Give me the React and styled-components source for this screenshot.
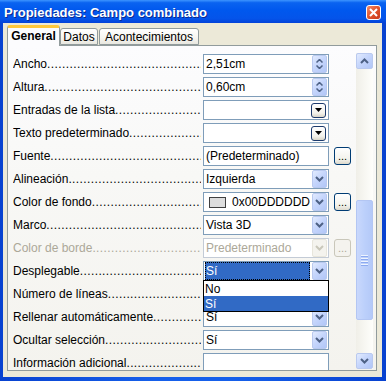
import React from "react";
import styled, { createGlobalStyle } from "styled-components";

const Global = createGlobalStyle`
  html, body {
    margin: 0;
    padding: 0;
    background: #ffffff;
  }
  body {
    font-family: "Liberation Sans", Arial, sans-serif;
  }
  * {
    box-sizing: border-box;
  }
`;

const Window = styled.div`
  width: 386px;
  height: 381px;
  display: flex;
  flex-direction: column;
  background: #0a46d8;
  overflow: hidden;
`;

const TitleBar = styled.div`
  height: 23px;
  display: flex;
  align-items: center;
  justify-content: space-between;
  padding: 0 5px 0 4px;
  background: linear-gradient(
    to bottom,
    #3d95ff 0%,
    #0a63f0 12%,
    #0058ee 45%,
    #0454ea 80%,
    #0342d8 100%
  );
`;

const Title = styled.div`
  color: #ffffff;
  font-family: "Liberation Sans", Arial, sans-serif;
  font-weight: 700;
  font-size: 13px;
  text-shadow: 1px 1px 0 #0a2a90;
  margin-top: 1px;
`;

const CloseButton = styled.div`
  width: 15px;
  height: 15px;
  border: 1px solid #ffffff;
  border-radius: 3px;
  background: linear-gradient(135deg, #f28a6a 0%, #e0542c 50%, #c8381a 100%);
  display: flex;
  align-items: center;
  justify-content: center;
  margin-top: 1px;
`;

const Frame = styled.div`
  flex: 1;
  display: flex;
  padding: 0 4px 4px 3px;
  background: linear-gradient(to right, #0842d0, #1660ea 40%, #1660ea 60%, #0842d0);
`;

const Body = styled.div`
  flex: 1;
  background: #ece9d8;
  padding: 2px 5px 0 4px;
  display: flex;
  flex-direction: column;
`;

const TabRow = styled.div`
  display: flex;
  align-items: flex-end;
  height: 20px;
  position: relative;
  z-index: 2;
`;

const Tab = styled.div`
  width: ${(p) => p.$w}px;
  height: ${(p) => (p.$active ? 21 : 17)}px;
  margin-left: ${(p) => p.$ml || 0}px;
  margin-bottom: ${(p) => (p.$active ? -1 : 0)}px;
  border: 1px solid #919b9c;
  border-bottom: ${(p) => (p.$active ? "none" : "1px solid #919b9c")};
  border-top: ${(p) => (p.$active ? "3px solid #ffc83c" : "1px solid #919b9c")};
  border-radius: 3px 3px 0 0;
  background: ${(p) =>
    p.$active
      ? "#fcfcfe"
      : "linear-gradient(to bottom, #ffffff 0%, #f6f5f0 60%, #e8e7e0 100%)"};
  font-size: 12px;
  font-weight: ${(p) => (p.$active ? 700 : 400)};
  color: #000000;
  display: flex;
  align-items: center;
  justify-content: center;
  padding-bottom: ${(p) => (p.$active ? 2 : 0)}px;
`;

const Panel = styled.div`
  height: 326px;
  border: 1px solid #919b9c;
  background: linear-gradient(to bottom, #fcfcfe 0%, #f8f8f6 40%, #f4f3ee 100%);
  display: flex;
  padding: 0 3px 0 5px;
  overflow: hidden;
  position: relative;
`;

const PropList = styled.div`
  width: 338px;
  padding-top: 8px;
  display: flex;
  flex-direction: column;
  gap: 3px;
`;

const Row = styled.div`
  display: flex;
  align-items: center;
  height: 20px;
  flex-shrink: 0;
`;

const Label = styled.div`
  width: 190px;
  padding-right: 2px;
  display: flex;
  font-size: 12px;
  color: ${(p) => (p.$disabled ? "#aca899" : "#000000")};
  white-space: nowrap;
  overflow: hidden;
`;

const Dots = styled.span`
  flex: 1;
  overflow: hidden;
  letter-spacing: 0.4px;
`;

const Field = styled.div`
  position: relative;
  width: 126px;
  height: 20px;
  border: 1px solid ${(p) => (p.$disabled ? "#c3cbd6" : "#7f9db9")};
  background: #ffffff;
  display: flex;
  align-items: center;
  padding: 1px;
  font-size: 12px;
  color: ${(p) => (p.$disabled ? "#aca899" : "#000000")};
`;

const FieldText = styled.div`
  flex: 1;
  padding-left: 1px;
  white-space: nowrap;
  overflow: hidden;
  display: flex;
  align-items: center;
  gap: 6px;
`;

const Selected = styled.div`
  flex: 1;
  height: 18px;
  margin-right: 2px;
  background: #316ac5;
  color: #ffffff;
  outline: 1px dotted #000000;
  outline-offset: -1px;
  display: flex;
  align-items: center;
  padding-left: 1px;
`;

const Swatch = styled.span`
  width: 17px;
  height: 11px;
  margin-left: 3px;
  background: #dddddd;
  border: 1px solid #404040;
`;

const ComboButton = styled.div`
  width: 15px;
  height: 18px;
  border: 1px solid ${(p) => (p.$disabled ? "#e8e6dc" : "#b9c9ef")};
  border-radius: 2px;
  background: ${(p) =>
    p.$disabled
      ? "#f4f3ee"
      : "linear-gradient(135deg, #e2ebfe 0%, #c6d6fc 45%, #b1c6f7 100%)"};
  display: flex;
  flex-direction: column;
  align-items: center;
  justify-content: center;
  gap: 2px;
`;

const ClassicButton = styled.div`
  width: 15px;
  height: 15px;
  margin-right: 1px;
  border: 1px solid #1c3a6c;
  border-radius: 3px;
  background: linear-gradient(to bottom, #ffffff 0%, #f3f2ec 70%, #d8d5c8 100%);
  display: flex;
  align-items: center;
  justify-content: center;
`;

const DotsButton = styled.div`
  width: 17px;
  height: 18px;
  margin-left: 5px;
  border: 1px solid ${(p) => (p.$disabled ? "#c9c7ba" : "#003c74")};
  border-radius: 3px;
  background: ${(p) =>
    p.$disabled
      ? "#f4f3ee"
      : "linear-gradient(to bottom, #ffffff 0%, #f3f2ec 70%, #dcd9cc 100%)"};
  color: ${(p) => (p.$disabled ? "#aca899" : "#000000")};
  font-size: 11px;
  display: flex;
  align-items: flex-end;
  justify-content: center;
  padding-bottom: 2px;
  line-height: 1;
`;

const DropList = styled.div`
  position: absolute;
  left: -1px;
  top: 18px;
  width: 126px;
  height: 32px;
  border: 1px solid #000000;
  background: #ffffff;
  z-index: 5;
  display: flex;
  flex-direction: column;
`;

const DropItem = styled.div`
  height: 15px;
  padding-left: 1px;
  display: flex;
  align-items: center;
  font-size: 12px;
  background: ${(p) => (p.$active ? "#316ac5" : "#ffffff")};
  color: ${(p) => (p.$active ? "#ffffff" : "#000000")};
`;

const Scrollbar = styled.div`
  width: 17px;
  margin-left: 5px;
  margin-top: 7px;
  height: 316px;
  display: flex;
  flex-direction: column;
  background: linear-gradient(to right, #f0efe8, #fefefb);
`;

const ScrollButton = styled.div`
  height: 16px;
  flex-shrink: 0;
  border: 1px solid #b9c9ef;
  border-radius: 2px;
  background: linear-gradient(135deg, #e2ebfe 0%, #c6d6fc 45%, #b1c6f7 100%);
  display: flex;
  align-items: center;
  justify-content: center;
`;

const Track = styled.div`
  flex: 1;
  padding-top: ${(p) => p.$offset}px;
`;

const Thumb = styled.div`
  height: ${(p) => p.$size}px;
  border: 1px solid #b3c6f3;
  border-radius: 2px;
  background: linear-gradient(to right, #c9d8fc 0%, #bcd0fb 50%, #b4c9f8 100%);
  display: flex;
  flex-direction: column;
  align-items: center;
  justify-content: center;
  gap: 1px;
`;

const Grip = styled.span`
  width: 7px;
  height: 1px;
  background: #eef4fe;
  box-shadow: 0 1px 0 #8caaf0;
  margin-bottom: 1px;
`;

function Chevron({ up, color = "#4d6185", small }) {
  const w = small ? 7 : 9;
  const h = small ? 4 : 6;
  const d = small
    ? up
      ? "M0.5 3.5 L3.5 0.5 L6.5 3.5"
      : "M0.5 0.5 L3.5 3.5 L6.5 0.5"
    : up
    ? "M1 5 L4.5 1.5 L8 5"
    : "M1 1 L4.5 4.5 L8 1";
  return (
    <svg width={w} height={h} viewBox={`0 0 ${w} ${h}`}>
      <path d={d} fill="none" stroke={color} strokeWidth={small ? 1.5 : 2} />
    </svg>
  );
}

function Triangle() {
  return (
    <svg width="7" height="4" viewBox="0 0 7 4">
      <path d="M0 0 L7 0 L3.5 4 Z" fill="#000000" />
    </svg>
  );
}

function Prop({ label, disabled, children, extra }) {
  return (
    <Row>
      <Label $disabled={disabled}>
        {label}
        <Dots>{".".repeat(80)}</Dots>
      </Label>
      {children}
      {extra}
    </Row>
  );
}

function Combo({ value, disabled, children }) {
  return (
    <Field $disabled={disabled}>
      {children || <FieldText>{value}</FieldText>}
      <ComboButton $disabled={disabled}>
        <Chevron color={disabled ? "#c9c7ba" : "#4d6185"} />
      </ComboButton>
    </Field>
  );
}

export default function App() {
  return (
    <>
      <Global />
      <Window>
        <TitleBar>
          <Title>Propiedades: Campo combinado</Title>
          <CloseButton>
            <svg width="9" height="9" viewBox="0 0 9 9">
              <path d="M1 1 L8 8 M8 1 L1 8" stroke="#ffffff" strokeWidth="2" />
            </svg>
          </CloseButton>
        </TitleBar>
        <Frame>
          <Body>
            <TabRow>
              <Tab $active $w={53}>General</Tab>
              <Tab $w={38}>Datos</Tab>
              <Tab $w={100} $ml={1}>Acontecimientos</Tab>
            </TabRow>
            <Panel>
              <PropList>
                <Prop label="Ancho">
                  <Field>
                    <FieldText>2,51cm</FieldText>
                    <ComboButton>
                      <Chevron up small />
                      <Chevron small />
                    </ComboButton>
                  </Field>
                </Prop>
                <Prop label="Altura">
                  <Field>
                    <FieldText>0,60cm</FieldText>
                    <ComboButton>
                      <Chevron up small />
                      <Chevron small />
                    </ComboButton>
                  </Field>
                </Prop>
                <Prop label="Entradas de la lista">
                  <Field>
                    <FieldText />
                    <ClassicButton>
                      <Triangle />
                    </ClassicButton>
                  </Field>
                </Prop>
                <Prop label="Texto predeterminado">
                  <Field>
                    <FieldText />
                    <ClassicButton>
                      <Triangle />
                    </ClassicButton>
                  </Field>
                </Prop>
                <Prop label="Fuente" extra={<DotsButton>...</DotsButton>}>
                  <Field>
                    <FieldText>(Predeterminado)</FieldText>
                  </Field>
                </Prop>
                <Prop label="Alineación">
                  <Combo value="Izquierda" />
                </Prop>
                <Prop label="Color de fondo" extra={<DotsButton>...</DotsButton>}>
                  <Combo>
                    <FieldText>
                      <Swatch />
                      0x00DDDDDD
                    </FieldText>
                  </Combo>
                </Prop>
                <Prop label="Marco">
                  <Combo value="Vista 3D" />
                </Prop>
                <Prop
                  label="Color de borde"
                  disabled
                  extra={<DotsButton $disabled>...</DotsButton>}
                >
                  <Combo value="Predeterminado" disabled />
                </Prop>
                <Prop label="Desplegable">
                  <Field>
                    <Selected>Sí</Selected>
                    <ComboButton>
                      <Chevron />
                    </ComboButton>
                    <DropList>
                      <DropItem>No</DropItem>
                      <DropItem $active>Sí</DropItem>
                    </DropList>
                  </Field>
                </Prop>
                <Prop label="Número de líneas">
                  <Field>
                    <FieldText />
                  </Field>
                </Prop>
                <Prop label="Rellenar automáticamente">
                  <Combo value="Sí" />
                </Prop>
                <Prop label="Ocultar selección">
                  <Combo value="Sí" />
                </Prop>
                <Prop label="Información adicional">
                  <Field>
                    <FieldText />
                  </Field>
                </Prop>
              </PropList>
              <Scrollbar>
                <ScrollButton>
                  <Chevron up />
                </ScrollButton>
                <Track $offset={131}>
                  <Thumb $size={120}>
                    <Grip />
                    <Grip />
                    <Grip />
                    <Grip />
                  </Thumb>
                </Track>
                <ScrollButton>
                  <Chevron />
                </ScrollButton>
              </Scrollbar>
            </Panel>
          </Body>
        </Frame>
      </Window>
    </>
  );
}
